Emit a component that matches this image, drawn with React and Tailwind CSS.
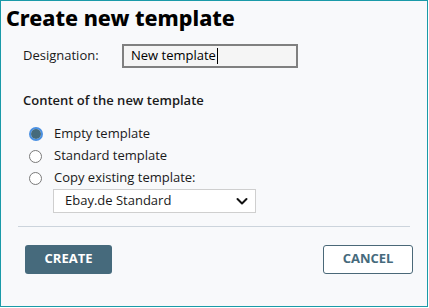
import React from "react";

function Radio({ checked }) {
  if (checked) {
    return (
      <span className="w-[14px] h-[14px] rounded-full border-2 border-[#4a90e2] flex items-center justify-center bg-white">
        <span className="w-[10px] h-[10px] rounded-full bg-[#456a7c]" />
      </span>
    );
  }
  return <span className="w-[13px] h-[13px] rounded-full border border-[#7a7a7a] bg-white" />;
}

export default function App() {
  const body = { fontFamily: '"Open Sans", "Noto Sans", sans-serif' };
  return (
    <div className="w-[429px] h-[308px] bg-white">
      <div
        className="w-[428px] h-[307px] border border-[#1a9aa8] bg-[#f8f9fb] flex flex-col text-[#1a1a1a]"
        style={body}
      >
        <h1
          className="pl-[5px] pt-[4px] text-[21.5px] leading-[26px] font-extrabold text-black"
          style={{ fontFamily: '"Noto Sans", sans-serif' }}
        >
          Create new template
        </h1>
        <div className="flex items-center mt-[13px] pl-[22px]">
          <span className="text-[13px] w-[99px]">Designation:</span>
          <div className="w-[176px] h-[24px] border-2 border-[#808080] bg-[#f5f5f5] flex items-center pl-[7px] text-[13px] text-black">
            New template
            <span className="w-[1px] h-[16px] bg-black ml-[1px]" />
          </div>
        </div>
        <div className="pl-[22px] mt-[23px] text-[13px] font-semibold">Content of the new template</div>
        <div className="pl-[28px] mt-[14px] flex flex-col gap-[3px] text-[13px]">
          <label className="flex items-center gap-[11px] h-[19px]">
            <Radio checked />
            <span>Empty template</span>
          </label>
          <label className="flex items-center gap-[12px] h-[19px]">
            <Radio />
            <span>Standard template</span>
          </label>
          <label className="flex items-center gap-[12px] h-[19px]">
            <Radio />
            <span>Copy existing template:</span>
          </label>
        </div>
        <div className="ml-[52px] mt-[1px] w-[203px] h-[24px] bg-white border border-[#cfcfcf] flex items-center justify-between pl-[11px] pr-[6px] text-[13px]">
          <span>Ebay.de Standard</span>
          <svg width="14" height="14" viewBox="0 0 14 14" fill="none">
            <path d="M2.5 5 L7 9.5 L11.5 5" stroke="#111" strokeWidth="2" strokeLinecap="round" strokeLinejoin="round" />
          </svg>
        </div>
        <div className="mx-[17px] mt-[13px] h-[1px] bg-[#ccd4dc]" />
        <div className="flex justify-between px-[24px] pr-[14px] mt-[18px]">
          <button
            className="w-[87px] h-[29px] rounded-[3px] bg-[#466a7c] text-white text-[13px] font-bold"
            style={{ fontFamily: '"Open Sans", sans-serif' }}
          >
            CREATE
          </button>
          <button
            className="w-[90px] h-[29px] rounded-[3px] bg-white border border-[#4a6878] text-[#466a7c] text-[13px] font-bold"
            style={{ fontFamily: '"Open Sans", sans-serif' }}
          >
            CANCEL
          </button>
        </div>
      </div>
    </div>
  );
}
